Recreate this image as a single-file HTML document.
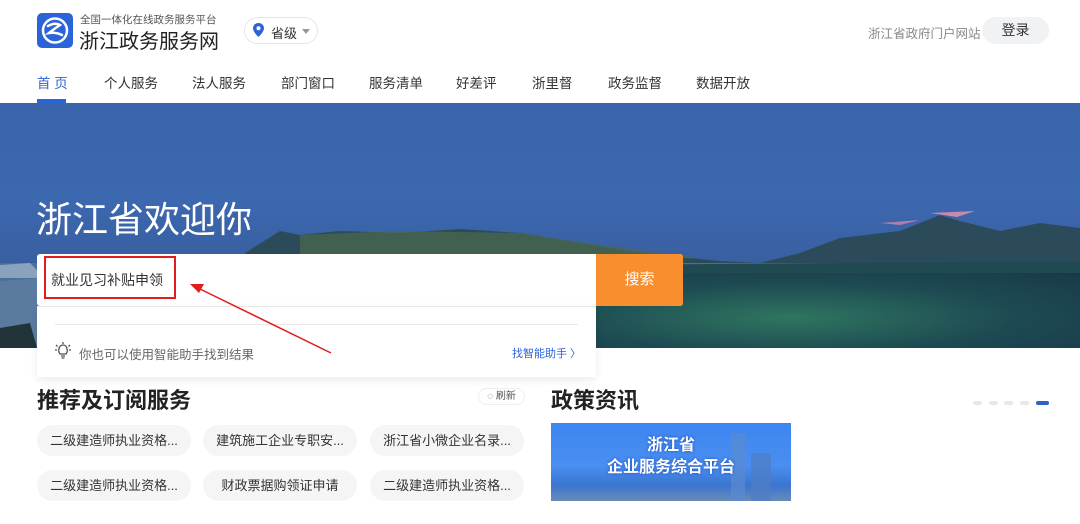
<!DOCTYPE html>
<html><head><meta charset="utf-8"><style>
*{margin:0;padding:0;box-sizing:border-box}
body{width:1080px;height:524px;overflow:hidden;background:#fff;font-family:"Liberation Sans","Noto Sans CJK SC",sans-serif;position:relative;color:#333}
.abs{position:absolute}
.nav span{position:absolute;top:72px;font-size:13.5px;color:#333;white-space:nowrap}
.pill{position:absolute;height:31px;width:154px;border-radius:16px;background:#f5f5f6;font-size:13px;color:#333;text-align:center;line-height:31px}
</style></head><body>
<div class="abs" style="left:37px;top:13px;width:36px;height:35px;background:#2b63d9;border-radius:5px">
<svg width="36" height="35" viewBox="0 0 36 35"><circle cx="18" cy="17.5" r="12" fill="none" stroke="#fff" stroke-width="2.5"/><path d="M11 13 Q18 9 23 12 Q17 16 12 20 Q19 19 25 22" fill="none" stroke="#fff" stroke-width="2.5" stroke-linecap="round"/></svg></div>
<div class="abs" style="left:80px;top:12px;font-size:10.5px;color:#555">全国一体化在线政务服务平台</div>
<div class="abs" style="left:79px;top:25px;font-size:20px;color:#222">浙江政务服务网</div>
<div class="abs" style="left:244px;top:17px;width:74px;height:27px;border:1px solid #e6e6e6;border-radius:14px"></div>
<svg class="abs" style="left:253px;top:23px" width="11" height="14" viewBox="0 0 11 14"><path d="M5.5 0C2.5 0 0 2.3 0 5.3 0 9 5.5 14 5.5 14S11 9 11 5.3C11 2.3 8.5 0 5.5 0z" fill="#2b63d9"/><circle cx="5.5" cy="5.3" r="2" fill="#fff"/></svg>
<div class="abs" style="left:271px;top:23px;font-size:13px;color:#333">省级</div>
<div class="abs" style="left:302px;top:29px;border:4px solid transparent;border-top:5px solid #999"></div>
<div class="abs" style="left:868px;top:23px;font-size:12.5px;color:#888">浙江省政府门户网站</div>
<div class="abs" style="left:982px;top:17px;width:67px;height:27px;border-radius:14px;background:#f1f2f4;font-size:14px;color:#333;text-align:center;line-height:27px">登录</div>
<div class="nav">
<span style="left:37px;color:#2b63d9">首 页</span>
<span style="left:104px">个人服务</span><span style="left:192px">法人服务</span><span style="left:281px">部门窗口</span><span style="left:369px">服务清单</span><span style="left:456px">好差评</span><span style="left:532px">浙里督</span><span style="left:608px">政务监督</span><span style="left:696px">数据开放</span>
</div>
<div class="abs" style="left:37px;top:99px;width:29px;height:4px;background:#2b63d9"></div>
<div class="abs" style="left:0;top:103px;width:1080px;height:245px;overflow:hidden;background:linear-gradient(180deg,#3a65ad 0%,#3c68b0 40%,#3a62a6 55%,#33578f 100%)">
<svg width="1080" height="245" viewBox="0 0 1080 245" style="position:absolute;left:0;top:0">
<path d="M0 160 L0 245 L1080 245 L1080 160Z" fill="#4a6f9c"/>
<path d="M245 150 L280 128 L300 132 L340 128 L400 130 L460 126 L520 130 L580 140 L640 150 L720 158 L760 160 L800 150 L840 135 L900 128 L940 112 L960 118 L1000 128 L1040 120 L1080 125 L1080 160 L245 160Z" fill="#2c4b5a"/>
<path d="M300 132 L400 128 L520 130 L600 142 L700 155 L560 160 L300 160Z" fill="#4b6a4a" opacity="0.7"/>
<path d="M0 162 L30 160 L45 175 L0 175Z" fill="#b8c5d6" opacity="0.6"/>
<path d="M0 178 L40 175 L40 245 L0 245Z" fill="#5a7aa0"/>
<path d="M596 162 L1080 158 L1080 245 L596 245Z" fill="#1f4a52"/>
<path d="M930 110 l45 -2 l-18 6z" fill="#c88aa8"/><path d="M880 120 l40 -3 l-20 5z" fill="#b07ea8"/>
<path d="M0 225 L30 220 L37 245 L0 245Z" fill="#20343a"/>
</svg>
<div class="abs" style="left:596px;top:170px;width:484px;height:75px;background:radial-gradient(ellipse at 40% 60%,#2f7560,#1d4a52 55%,#19394a)"></div>
</div>
<div class="abs" style="left:36px;top:191px;font-size:36px;color:#fff">浙江省欢迎你</div>
<div class="abs" style="left:37px;top:254px;width:646px;height:52px;background:#fff;border-radius:3px;overflow:hidden">
<div class="abs" style="left:559px;top:0;width:87px;height:52px;background:#f98e2e;color:#fff;font-size:15px;text-align:center;line-height:52px">搜索</div>
</div>
<div class="abs" style="left:44px;top:256px;width:132px;height:43px;border:2px solid #e21c1c"></div>
<div class="abs" style="left:51px;top:270px;font-size:14px;color:#333">就业见习补贴申领</div>
<div class="abs" style="left:37px;top:306px;width:559px;height:71px;background:#fff;box-shadow:0 3px 8px rgba(0,0,0,0.08);border-top:1px solid #e8e8e8"></div>
<div class="abs" style="left:55px;top:324px;width:523px;height:1px;background:#e8e8e8"></div>
<svg class="abs" style="left:55px;top:342px" width="16" height="18" viewBox="0 0 16 18"><path d="M5 12 Q3 9 4 7 A4 4 0 0 1 12 7 Q13 9 11 12Z M6 14h4 M6.5 16h3 M8 0v2 M1 3l1.5 1.5 M15 3l-1.5 1.5 M0 8h2 M14 8h2" fill="none" stroke="#555" stroke-width="1.3"/></svg>
<div class="abs" style="left:79px;top:344px;font-size:12.5px;color:#666">你也可以使用智能助手找到结果</div>
<div class="abs" style="left:512px;top:345px;font-size:11px;color:#2b63d9">找智能助手 〉</div>
<svg class="abs" style="left:0;top:0" width="1080" height="524"><line x1="331" y1="353" x2="200" y2="289" stroke="#e21c1c" stroke-width="1.5"/><path d="M190 284 L204 284 L199 293Z" fill="#e21c1c"/></svg>
<div class="abs" style="left:37px;top:383px;font-size:22px;font-weight:bold;color:#222">推荐及订阅服务</div>
<div class="abs" style="left:478px;top:388px;width:47px;height:17px;border:1px solid #eee;border-radius:9px;font-size:10px;color:#555;text-align:center;line-height:15px">◌ 刷新</div>
<div class="pill" style="left:37px;top:425px">二级建造师执业资格...</div>
<div class="pill" style="left:203px;top:425px">建筑施工企业专职安...</div>
<div class="pill" style="left:370px;top:425px">浙江省小微企业名录...</div>
<div class="pill" style="left:37px;top:470px">二级建造师执业资格...</div>
<div class="pill" style="left:203px;top:470px">财政票据购领证申请</div>
<div class="pill" style="left:370px;top:470px">二级建造师执业资格...</div>
<div class="abs" style="left:551px;top:383px;font-size:22px;font-weight:bold;color:#222">政策资讯</div>
<div class="abs" style="left:973px;top:401px;width:9px;height:4px;border-radius:2px;background:#e6e8ec"></div>
<div class="abs" style="left:989px;top:401px;width:9px;height:4px;border-radius:2px;background:#e6e8ec"></div>
<div class="abs" style="left:1004px;top:401px;width:9px;height:4px;border-radius:2px;background:#e6e8ec"></div>
<div class="abs" style="left:1020px;top:401px;width:9px;height:4px;border-radius:2px;background:#e6e8ec"></div>
<div class="abs" style="left:1036px;top:401px;width:13px;height:4px;border-radius:2px;background:#2b63c6"></div>
<div class="abs" style="left:551px;top:423px;width:240px;height:78px;background:linear-gradient(180deg,#3d86f0 0%,#4a8ef0 55%,#3a75d0 80%,#6a8ab8 100%);overflow:hidden">
<div class="abs" style="left:180px;top:10px;width:14px;height:70px;background:#5a8ad0;opacity:.7"></div>
<div class="abs" style="left:200px;top:30px;width:20px;height:50px;background:#4e7ec4;opacity:.7"></div>
<div class="abs" style="left:0;top:12px;width:240px;text-align:center;font-size:16px;font-weight:bold;color:#fff;line-height:22px;text-shadow:0 0 3px #1a4fc0">浙江省<br>企业服务综合平台</div>
</div>
</body></html>
